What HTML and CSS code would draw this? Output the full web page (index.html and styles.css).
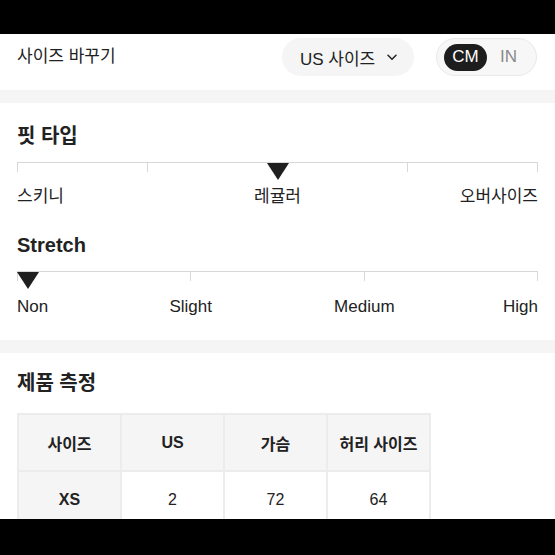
FILE: index.html
```html
<!DOCTYPE html>
<html lang="ko">
<head>
<meta charset="utf-8">
<link rel="stylesheet" href="styles.css">
</head>
<body>
<div class="topbar"></div>
<header class="header">
  <div class="header-title">사이즈 바꾸기</div>
  <div class="header-controls">
    <div class="size-select">
      <span>US 사이즈</span>
      <svg class="chev" width="10" height="7" viewBox="0 0 10 7"><path d="M1 1.2 L5 5.2 L9 1.2" fill="none" stroke="#222" stroke-width="1.5" stroke-linecap="round" stroke-linejoin="round"/></svg>
    </div>
    <div class="unit-toggle">
      <span class="unit active">CM</span>
      <span class="unit">IN</span>
    </div>
  </div>
</header>
<div class="band"></div>
<section class="section fit">
  <h2 class="heading">핏 타입</h2>
  <div class="track track-fit">
    <div class="seg seg-q"></div>
    <div class="seg seg-h"></div>
    <div class="seg seg-q last"></div>
    <div class="marker marker-center"></div>
  </div>
  <div class="labels labels-3">
    <span class="l-left">스키니</span>
    <span class="l-center">레귤러</span>
    <span class="l-right">오버사이즈</span>
  </div>
  <h2 class="heading heading-stretch">Stretch</h2>
  <div class="track track-stretch">
    <div class="seg"></div>
    <div class="seg"></div>
    <div class="seg last"></div>
    <div class="marker marker-start"></div>
  </div>
  <div class="labels labels-6">
    <span class="l-left c1">Non</span>
    <span class="l-center c23">Slight</span>
    <span class="l-center c45">Medium</span>
    <span class="l-right c6">High</span>
  </div>
</section>
<div class="band"></div>
<section class="section measure">
  <h2 class="heading">제품 측정</h2>
  <table class="size-table">
    <thead>
      <tr><th>사이즈</th><th>US</th><th>가슴</th><th>허리 사이즈</th></tr>
    </thead>
    <tbody>
      <tr><th>XS</th><td>2</td><td>72</td><td>64</td></tr>
    </tbody>
  </table>
</section>
<div class="bottombar"></div>
</body>
</html>
```

FILE: styles.css
```css
* { box-sizing: border-box; }
html, body { margin: 0; padding: 0; }
body {
  width: 555px;
  height: 555px;
  overflow: hidden;
  position: relative;
  background: #fff;
  color: #222;
  font-family: "Liberation Sans", "Noto Sans CJK KR", sans-serif;
}
.topbar { height: 34px; background: #000; }
.header {
  display: flex;
  align-items: center;
  justify-content: space-between;
  padding: 4px 18px 14px 17px;
}
.header-title { font-size: 17px; line-height: 20px; }
.header-controls { display: flex; align-items: center; gap: 22px; }
.size-select {
  display: flex;
  align-items: center;
  gap: 12px;
  width: 132px;
  height: 38px;
  padding-left: 18px;
  border-radius: 19px;
  background: #f5f5f5;
  font-size: 17px;
}
.chev { margin-top: 1px; }
.unit-toggle {
  display: flex;
  align-items: center;
  width: 101px;
  height: 38px;
  padding: 0 7px;
  border-radius: 19px;
  background: #f7f7f7;
  border: 1px solid #e9e9e9;
  gap: 13px;
}
.unit { font-size: 17px; color: #8a8a8a; line-height: 20px; }
.unit.active {
  background: #1d1d1d;
  color: #fff;
  border-radius: 14px;
  height: 27px;
  width: 43px;
  display: flex;
  align-items: center;
  justify-content: center;
}
.band { height: 13px; background: #f5f5f5; }
.section { padding: 21px 17px 23px 17px; }
.heading {
  margin: 0;
  font-size: 20px;
  line-height: 24px;
  font-weight: bold;
}
.heading-stretch { margin-top: 26px; }
.track {
  position: relative;
  display: flex;
  height: 10px;
  margin-top: 14px;
}
.seg {
  flex: 1;
  border-top: 1px solid #d8d8d8;
  border-left: 1px solid #d8d8d8;
}
.seg.last { border-right: 1px solid #d8d8d8; }
.seg-q { flex: 1; }
.seg-h { flex: 2; }
.marker {
  position: absolute;
  top: 1px;
  width: 0;
  height: 0;
  border-left: 11px solid transparent;
  border-right: 11px solid transparent;
  border-top: 17px solid #1f1f1f;
}
.marker-center { left: calc(50% - 11px); }
.marker-start { left: 0; }
.labels {
  display: grid;
  margin-top: 15px;
  font-size: 17px;
  line-height: 20px;
}
.labels-3 { grid-template-columns: 1fr 1fr 1fr; }
.labels-6 { grid-template-columns: repeat(6, 1fr); margin-top: 16px; }
.l-left { text-align: left; }
.l-center { text-align: center; white-space: nowrap; }
.l-right { text-align: right; white-space: nowrap; }
.c1 { grid-column: 1; }
.c23 { grid-column: 2 / 4; }
.c45 { grid-column: 4 / 6; }
.c6 { grid-column: 6; }
.measure { padding-top: 18px; }
.size-table {
  margin-top: 18px;
  width: 414px;
  border-collapse: collapse;
  table-layout: fixed;
  font-size: 16px;
}
.size-table th, .size-table td {
  border: 2px solid #ececec;
  height: 57px;
  text-align: center;
  padding: 0;
}
.size-table th { background: #f5f5f5; font-weight: bold; }
.size-table td { background: #fff; }
.bottombar {
  position: absolute;
  left: 0;
  right: 0;
  top: 519px;
  height: 36px;
  background: #000;
}
```
